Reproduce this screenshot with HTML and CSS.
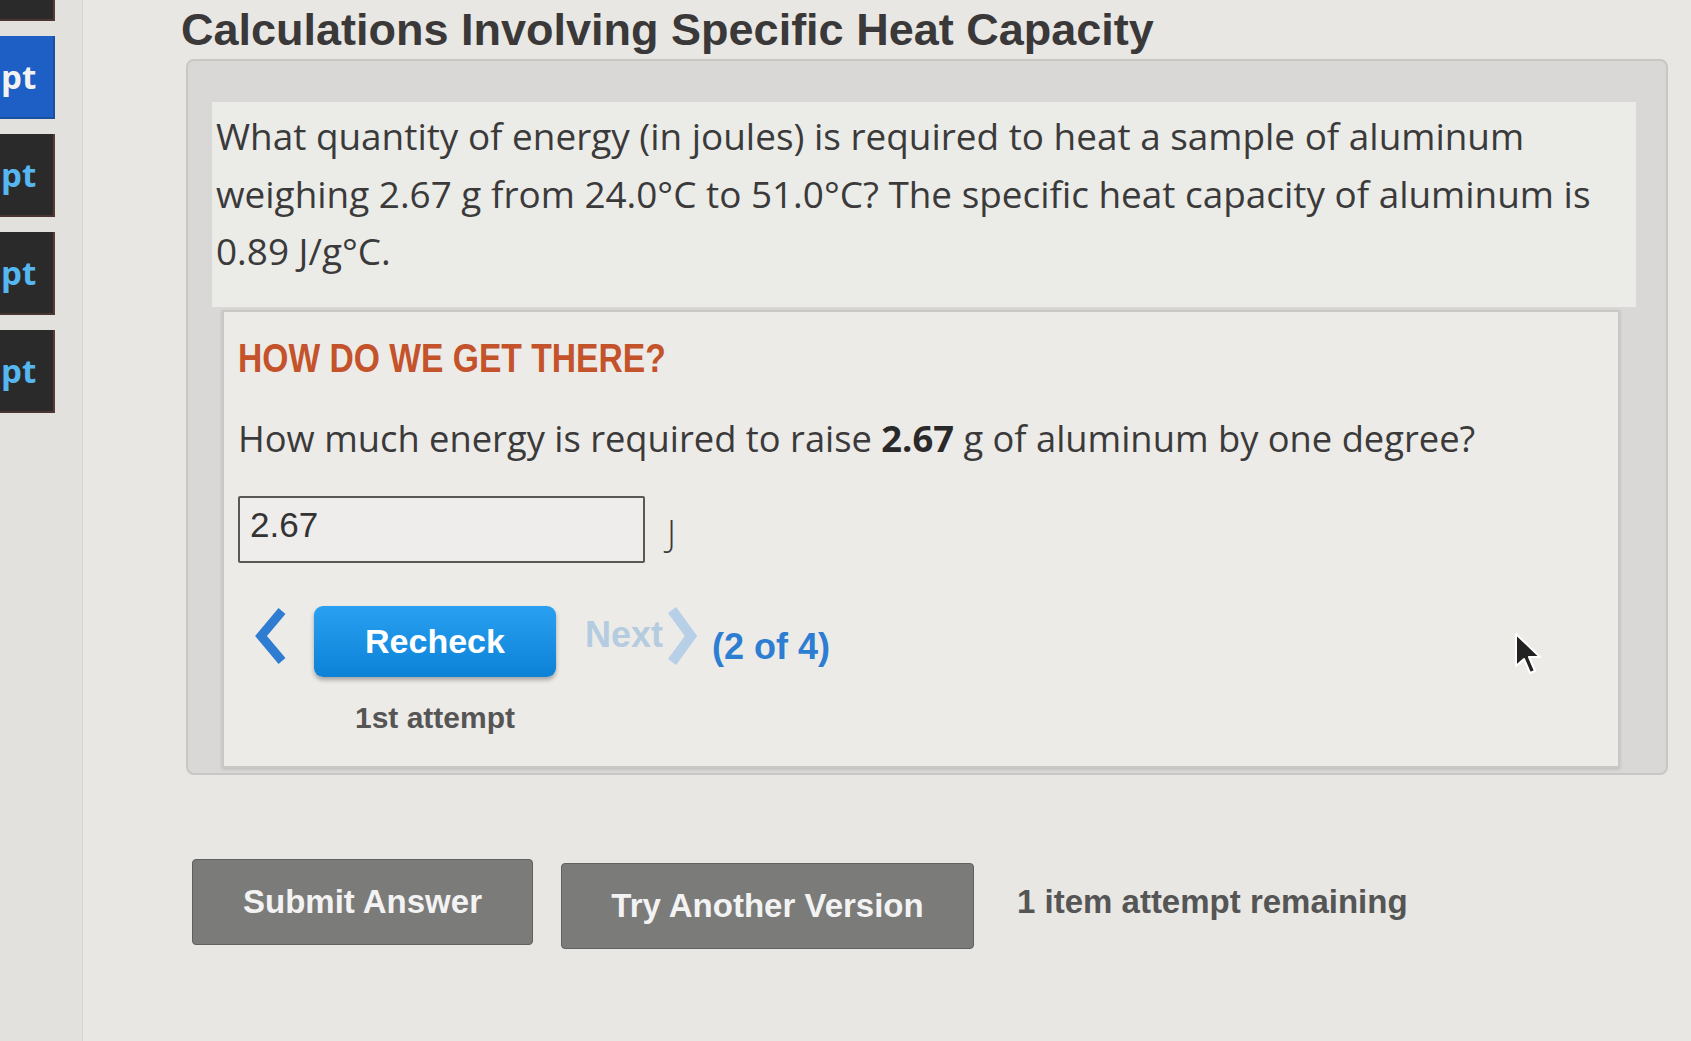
FILE: index.html
```html
<!DOCTYPE html>
<html lang="en">
<head>
  <meta charset="UTF-8" />
  <meta name="viewport" content="width=device-width, initial-scale=1.0"/>
  <title>Calculations Involving Specific Heat Capacity</title>
  <link rel="stylesheet" href="styles.css">
</head>
<body>
  <div class="sidebar">
    <div class="tab tab-top"></div>
    <div class="tab active"><span>pt</span></div>
    <div class="tab"><span>pt</span></div>
    <div class="tab"><span>pt</span></div>
    <div class="tab"><span>pt</span></div>
  </div>

  <div class="main">
    <h1 class="title">Calculations Involving Specific Heat Capacity</h1>

    <div class="panel">
      <div class="question">
        What quantity of energy (in joules) is required to heat a sample of aluminum<br>
        weighing 2.67 g from 24.0°C to 51.0°C? The specific heat capacity of aluminum is<br>
        0.89 J/g°C.
      </div>

      <div class="hint">
        <h2 class="hint-title">HOW DO WE GET THERE?</h2>
        <p class="hint-question">How much energy is required to raise <b>2.67</b> g of aluminum by one degree?</p>

        <div class="answer-row">
          <input class="answer" type="text" value="2.67">
          <span class="unit">J</span>
        </div>

        <div class="nav-row">
          <svg class="chev" width="36" height="58" viewBox="0 0 36 58">
            <polyline points="30,4 9,29 30,54" fill="none" stroke="#2f7dd0" stroke-width="9"/>
          </svg>
          <div class="nav-col">
            <button class="recheck">Recheck</button>
            <div class="attempt">1st attempt</div>
          </div>
          <span class="next">Next</span>
          <svg class="chev chev-next" width="32" height="60" viewBox="0 0 32 60">
            <polyline points="5,4 24,30 5,56" fill="none" stroke="#b7d0e7" stroke-width="10"/>
          </svg>
          <span class="count">(2 of 4)</span>
        </div>

        <svg class="cursor" width="28" height="44" viewBox="0 0 28 44">
          <path d="M2 2 L2 34 L10 27 L16 41 L21 39 L15 25 L26 25 Z" fill="#222" stroke="#fff" stroke-width="2" stroke-linejoin="round"/>
        </svg>
      </div>
    </div>

    <div class="actions">
      <button class="gray-btn submit">Submit Answer</button>
      <button class="gray-btn another">Try Another Version</button>
      <span class="remaining">1 item attempt remaining</span>
    </div>
  </div>
</body>
</html>
```

FILE: styles.css
```css
body {
  margin: 0;
  display: flex;
  height: 100vh;
  overflow: hidden;
  background: #e8e7e4;
  font-family: "Liberation Sans", Arial, sans-serif;
  color: #3a3a3a;
}
.sidebar {
  width: 82px;
  flex-shrink: 0;
  background: #e2e1de;
  border-right: 1px solid #d7d6d3;
  display: flex;
  flex-direction: column;
  gap: 15px;
}
.tab {
  width: 55px;
  height: 83px;
  background: #2b2a2a;
  border-right: 2px solid #5a3a30;
  border-bottom: 2px solid #4a3530;
  box-sizing: border-box;
  display: flex;
  align-items: center;
  overflow: hidden;
}
.tab span {
  margin-left: 1px;
  font-family: "Open Sans", sans-serif;
  font-weight: bold;
  font-size: 33px;
  line-height: 40px;
  color: #55b6f0;
}
.tab-top {
  height: 21px;
}
.active {
  background: #1d5fc4;
  border-color: #1d4fa0;
}
.active span {
  color: #f2f2f2;
}
.main {
  flex: 1;
  padding-left: 98px;
}
.title {
  margin: 0;
  padding-top: 4px;
  font-size: 45px;
  line-height: 52px;
  font-weight: bold;
  color: #3a3838;
}
.panel {
  margin-top: 3px;
  margin-left: 5px;
  width: 1482px;
  height: 716px;
  box-sizing: border-box;
  padding-top: 41px;
  background: #d9d8d6;
  border: 2px solid #c8c7c4;
  border-radius: 8px;
}
.question {
  margin: 0 30px 0 24px;
  height: 205px;
  box-sizing: border-box;
  padding: 6px 4px 0;
  background: #ebebe8;
  font-family: "Open Sans", sans-serif;
  font-size: 36.9px;
  line-height: 57.5px;
  color: #3b3a3a;
}
.hint {
  position: relative;
  margin: 3px 46px 0 34px;
  height: 458px;
  box-sizing: border-box;
  padding: 22px 14px 0;
  background: #ecebe8;
  border: 2px solid #c9c8c5;
  box-shadow: 0 1px 3px rgba(0,0,0,0.15);
}
.hint-title {
  display: inline-block;
  margin: 0;
  transform: scaleX(0.82);
  transform-origin: left center;
  font-size: 41px;
  line-height: 48px;
  font-weight: bold;
  color: #c4522a;
}
.hint-question {
  margin: 30px 0 0;
  font-family: "Open Sans", sans-serif;
  font-size: 36.3px;
  line-height: 52px;
  color: #3b3a3a;
}
.hint-question b {
  color: #2a2929;
}
.answer-row {
  margin-top: 32px;
  display: flex;
  align-items: flex-start;
}
.answer {
  width: 407px;
  height: 67px;
  box-sizing: border-box;
  padding: 0 10px 10px;
  border: 2px solid #5a5856;
  border-radius: 2px;
  background: #eeedeb;
  font-family: "Liberation Sans", sans-serif;
  font-size: 35px;
  color: #333;
}
.unit {
  margin-left: 22px;
  margin-top: 12px;
  font-family: "Open Sans", sans-serif;
  font-weight: 300;
  font-size: 36px;
  color: #3b3a3a;
}
.nav-row {
  margin-top: 43px;
  display: flex;
  align-items: flex-start;
}
.chev {
  margin-left: 14px;
  margin-top: 1px;
}
.nav-col {
  margin-left: 26px;
  display: flex;
  flex-direction: column;
  align-items: center;
}
.recheck {
  width: 242px;
  height: 71px;
  border: none;
  border-radius: 9px;
  background: linear-gradient(#2aa0f2, #0b82d6);
  box-shadow: 0 3px 4px rgba(0,0,0,0.3);
  font-family: "Liberation Sans", sans-serif;
  font-weight: bold;
  font-size: 34px;
  color: #fff;
}
.attempt {
  margin-top: 24px;
  font-weight: bold;
  font-size: 30px;
  color: #555;
}
.next {
  margin-left: 29px;
  margin-top: 8px;
  font-weight: bold;
  font-size: 36px;
  color: #b5cbe0;
}
.chev-next {
  margin-left: 4px;
  margin-top: 0;
}
.count {
  margin-left: 13px;
  margin-top: 20px;
  font-weight: bold;
  font-size: 36px;
  color: #2d7dd2;
}
.cursor {
  position: absolute;
  left: 1290px;
  top: 320px;
}
.actions {
  margin-top: 80px;
  margin-left: 11px;
  display: flex;
  align-items: center;
}
.gray-btn {
  height: 86px;
  border: 1px solid #606060;
  border-radius: 4px;
  background: #7b7b7a;
  font-family: "Liberation Sans", sans-serif;
  font-weight: bold;
  font-size: 33px;
  color: #f3f3f3;
}
.submit {
  width: 341px;
}
.another {
  width: 413px;
  margin-left: 28px;
  margin-top: 8px;
}
.remaining {
  margin-left: 43px;
  font-weight: bold;
  font-size: 33px;
  color: #555;
}
```
